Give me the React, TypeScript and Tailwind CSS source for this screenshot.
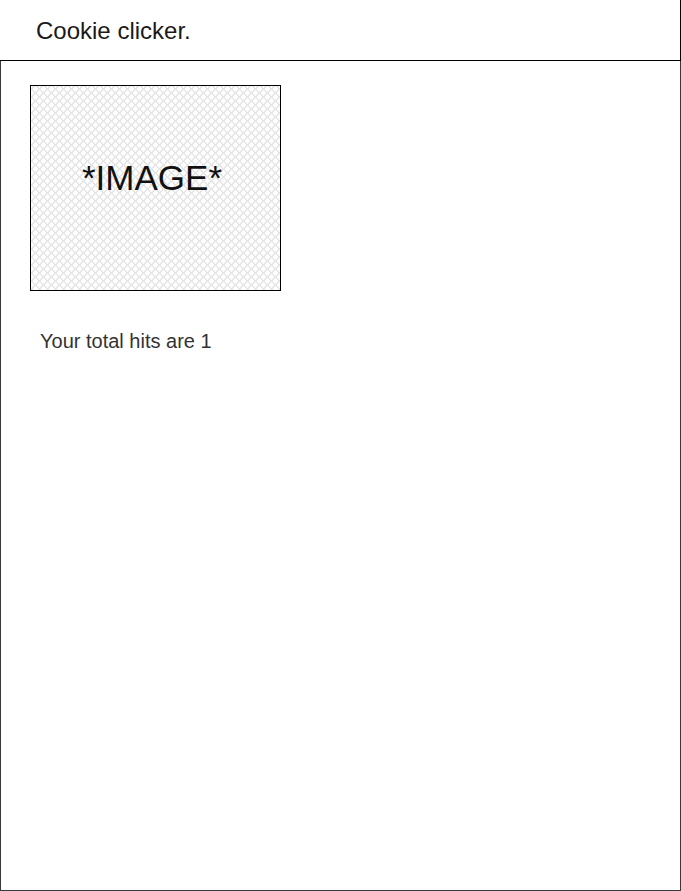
export default function App() {
  return (
    <div className="w-[681px] h-[891px] bg-white font-['Liberation_Sans',Arial,sans-serif]">
      <header className="h-[61px] flex items-center pl-9 border-r border-b border-black">
        <h1 className="text-[24px] text-[#1a1a1a] leading-none pt-[1px]">Cookie clicker.</h1>
      </header>
      <main className="h-[830px] border-l border-r border-b border-[#36393d] pl-[29px] pt-[24px]">
        <div className="w-[251px] h-[206px] border border-black flex items-center justify-center bg-[repeating-linear-gradient(45deg,#e6e6e6_0px,#e6e6e6_1.5px,transparent_1.5px,transparent_5.66px),repeating-linear-gradient(-45deg,#e6e6e6_0px,#e6e6e6_1.5px,transparent_1.5px,transparent_5.66px)]">
          <span className="text-[35px] text-[#111] leading-none -mt-[22px] -ml-[7px]">*IMAGE*</span>
        </div>
        <p className="ml-[10px] mt-[39px] text-[20px] text-[#333] leading-[23px]">Your total hits are 1</p>
      </main>
    </div>
  );
}
